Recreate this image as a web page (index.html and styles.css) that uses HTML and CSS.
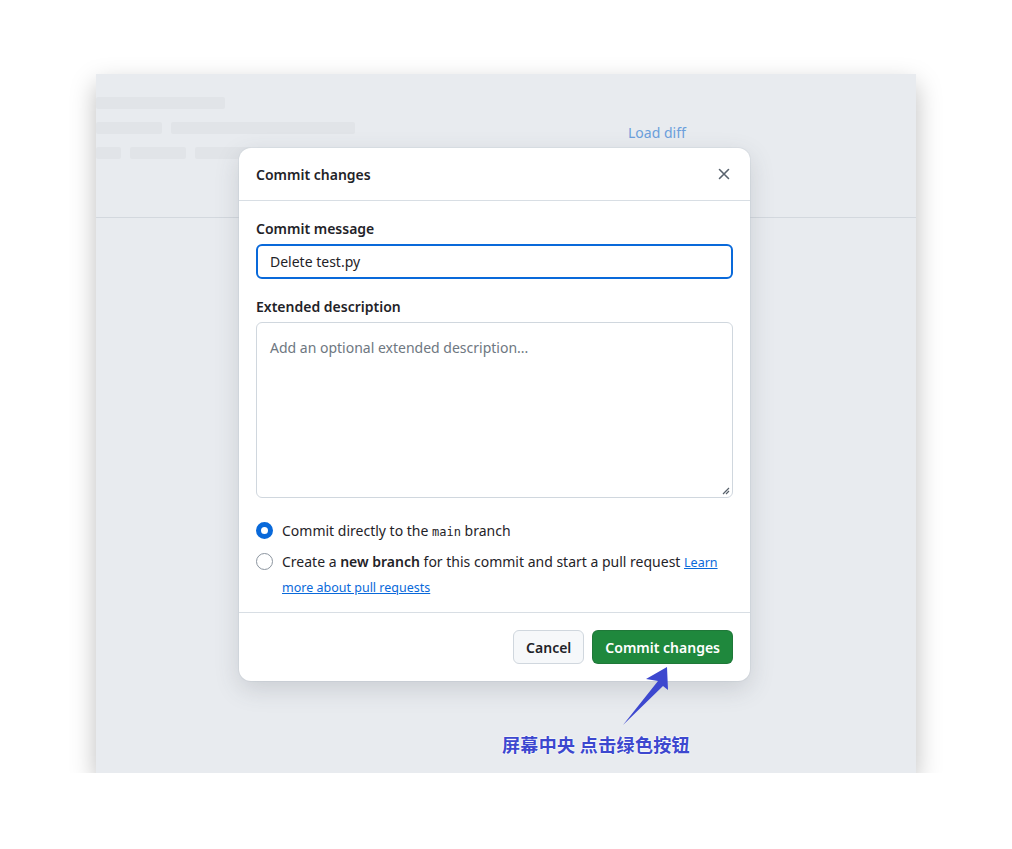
FILE: index.html
```html
<!DOCTYPE html>
<html lang="en">
<head>
<meta charset="utf-8">
<title>Commit changes</title>
<link rel="stylesheet" href="styles.css">
</head>
<body>
<div class="frame">
  <div class="skeleton">
    <div class="sk-row"><span class="bar w130"></span></div>
    <div class="sk-row"><span class="bar w66"></span><span class="bar w184"></span></div>
    <div class="sk-row"><span class="bar w25"></span><span class="bar w56"></span><span class="bar w56"></span></div>
    <a class="load-diff">Load diff</a>
  </div>
  <div class="rule"></div>

  <div class="modal">
    <div class="modal-head">
      <h2 class="modal-title">Commit changes</h2>
      <svg class="close" width="16" height="16" viewBox="0 0 16 16"><path d="M3.5 3.5l9 9M12.5 3.5l-9 9" stroke="#59636e" stroke-width="1.6" stroke-linecap="round"/></svg>
    </div>
    <div class="modal-body">
      <label class="label">Commit message</label>
      <div class="input">Delete test.py</div>
      <label class="label label2">Extended description</label>
      <div class="textarea">
        <span class="placeholder">Add an optional extended description...</span>
        <svg class="grip" width="9" height="9" viewBox="0 0 9 9"><path d="M8 2L2 8M8 5L5 8" stroke="#57606a" stroke-width="1.2"/></svg>
      </div>
      <div class="radio-row first">
        <span class="radio checked"></span>
        <span class="radio-text">Commit directly to the <code>main</code> branch</span>
      </div>
      <div class="radio-row second">
        <span class="radio"></span>
        <span class="radio-text">Create a <b>new branch</b> for this commit and start a pull request <a class="link">Learn more about pull requests</a></span>
      </div>
    </div>
    <div class="modal-foot">
      <button class="btn">Cancel</button>
      <button class="btn primary">Commit changes</button>
    </div>
  </div>

  <svg class="arrow" width="60" height="70" viewBox="0 0 60 70"><polygon points="47,0 48,23 43,19 3,58 38,14 26,12" fill="#3d48cf"/></svg>
  <div class="note">屏幕中央 点击绿色按钮</div>
</div>
</body>
</html>
```
FILE: styles.css
```css
html, body { margin: 0; padding: 0; background: #ffffff; }
body {
  padding: 74px 0 0 96px;
  font-family: "Noto Sans", "Open Sans", sans-serif;
  color: #1f2328;
}
.frame {
  position: relative;
  width: 820px;
  height: 699px;
  background: #e8ebef;
  box-shadow: 0 10px 24px rgba(0, 0, 0, 0.26);
}
.skeleton {
  position: relative;
  height: 143px;
  padding-top: 23px;
  box-sizing: border-box;
}
.sk-row { display: flex; gap: 9px; height: 12px; margin-bottom: 13px; }
.bar { display: block; height: 12px; background: #e1e4e8; border-radius: 2px; }
.w130 { width: 129px; }
.w66 { width: 66px; }
.w184 { width: 184px; }
.w25 { width: 25px; }
.w56 { width: 56px; }
.load-diff {
  position: absolute;
  left: 532px;
  top: 49px;
  font-size: 14px;
  color: #6b9fdc;
}
.rule { height: 1px; background: #d3d8de; }

.modal {
  position: absolute;
  left: 143px;
  top: 74px;
  width: 511px;
  background: #fff;
  border-radius: 12px;
  box-shadow: 0 8px 24px rgba(66, 74, 83, 0.18), 0 0 0 1px rgba(208, 215, 222, 0.4);
}
.modal-head {
  display: flex;
  align-items: center;
  justify-content: space-between;
  height: 52px;
  padding: 0 18px 0 17px;
  border-bottom: 1px solid #d8dee4;
}
.modal-title { margin: 0; font-size: 14px; font-weight: 600; }
.close { display: block; }
.modal-body { padding: 18px 17px 12px; }
.label { display: block; font-size: 14px; font-weight: 600; line-height: 20px; margin-bottom: 5px; }
.label2 { margin-top: 18px; }
.input {
  height: 35px;
  box-sizing: border-box;
  border: 2px solid #0969da;
  border-radius: 6px;
  padding: 0 12px;
  font-size: 14px;
  line-height: 31px;
}
.textarea {
  position: relative;
  height: 176px;
  box-sizing: border-box;
  border: 1px solid #d0d7de;
  border-radius: 6px;
  padding: 13px 13px;
}
.placeholder { font-size: 14px; color: #6e7781; line-height: 22px; }
.grip { position: absolute; right: 2px; bottom: 2px; }
.radio-row { display: flex; align-items: flex-start; gap: 9px; font-size: 14px; line-height: 24px; }
.radio-row.first { margin-top: 21px; }
.radio-row.second { margin-top: 6px; }
.radio {
  flex: none;
  width: 17px;
  height: 17px;
  box-sizing: border-box;
  border-radius: 50%;
  border: 1px solid #8c959f;
  margin-top: 3px;
  background: #fff;
}
.radio.checked { border: 5px solid #0969da; }
code { font-family: "DejaVu Sans Mono", "Liberation Mono", monospace; font-size: 12px; }
b { font-weight: 600; }
.link { color: #0969da; text-decoration: underline; font-size: 12.5px; }
.modal-foot {
  display: flex;
  justify-content: flex-end;
  gap: 8px;
  padding: 17px;
  border-top: 1px solid #d8dee4;
}
.btn {
  height: 34px;
  padding: 0 12px;
  border-radius: 6px;
  border: 1px solid #d0d7de;
  background: #f6f8fa;
  font-family: inherit;
  font-size: 14px;
  font-weight: 600;
  color: #1f2328;
}
.btn.primary { background: #1f883d; border-color: rgba(31, 35, 40, 0.15); color: #fff; }
.arrow { position: absolute; left: 524px; top: 593px; }
.note {
  position: absolute;
  left: 406px;
  top: 658px;
  font-family: "Noto Sans CJK SC", sans-serif;
  font-size: 18px;
  font-weight: 700;
  letter-spacing: 0.35px;
  color: #3d48cf;
  text-shadow: 0 0 2px #fff, 0 0 2px #fff;
  line-height: 24px;
}
```
